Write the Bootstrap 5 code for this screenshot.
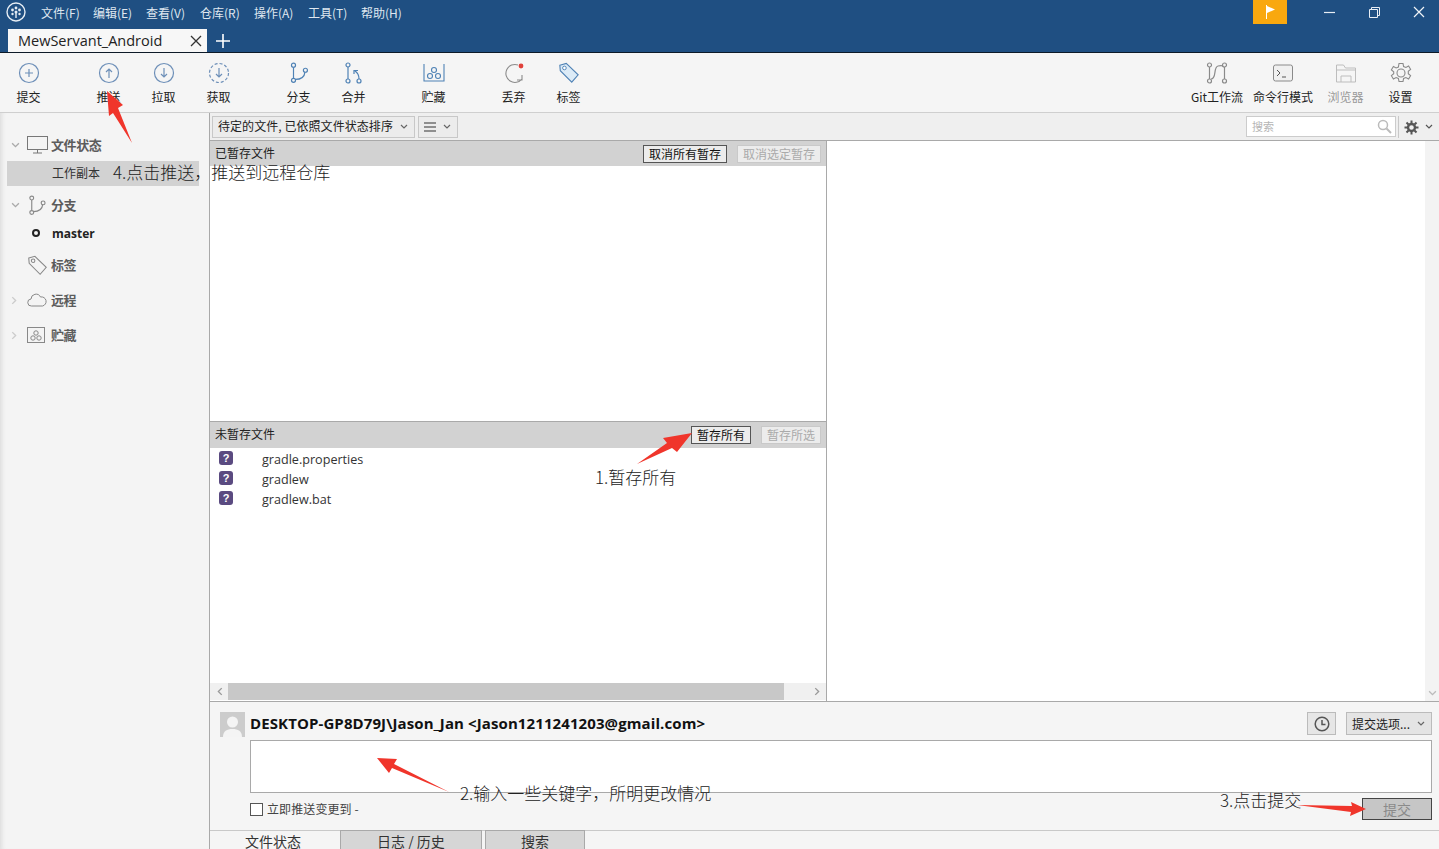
<!DOCTYPE html>
<html lang="zh-CN">
<head>
<meta charset="utf-8">
<title>SourceTree</title>
<link href="https://cdn.jsdelivr.net/npm/bootstrap@5.3.0/dist/css/bootstrap.min.css" rel="stylesheet">
<style>
html,body{height:849px;overflow:hidden}
body{font-family:"Noto Sans CJK SC","Liberation Sans",sans-serif;font-size:12px;line-height:1;color:#222;background:#f5f5f5;position:relative}
.app-shell{width:1439px;height:849px}
.title-zone{height:53px;background:#1f4f82;border-bottom:1px solid #0d1a28;flex:none}
.menu-row{height:26px;padding-left:6px}
.logo-wrap{width:35px}
.menu-label{color:#dfe7f0;margin-right:14px;font-size:12px;white-space:nowrap;width:40px}
.menu-label:nth-child(1){width:38px}
.menu-label:nth-child(2),.menu-label:nth-child(6){width:39px}
.flag-btn{width:34px;height:24px;background:#f9a80f;margin-right:22px}
.win-btn{width:40px;height:24px}
.win-btn+.win-btn{margin-left:5px}
.tab-row{height:26px;padding-left:8px}
.repo-tab{width:199px;height:23px;margin-top:3px;background:#f7f7f7;padding:0 5px 0 10px;font:14.500px "Open Sans",sans-serif;color:#222}
.tool-bar{height:60px;flex:none;border-bottom:1px solid #cfcfcf;background:#f5f5f5;padding:0 11px 0 1px}
.tool-item{width:55px;height:60px;padding-top:9px;color:#222;font-size:12px}
.tool-item.wide-item{width:66px;white-space:nowrap}
.tool-item.off-item{color:#999;margin-left:2px}
.tool-item svg{margin-bottom:7px;display:block}
.group-gap{margin-left:25px}
.main-zone{min-height:0}
.side-pane{width:210px;flex:none;border-right:1px solid #a9a9a9;background:#f4f4f4;padding:18px 10px 0 7px;box-shadow:inset 5px 0 4px -3px #ddd}
.side-row{height:28px;color:#5c5c5c;font-weight:700;font-size:13px;letter-spacing:-.4px}
.side-row svg{flex:none}
.side-row>span:last-child{margin-top:-2px}
.caret-cell{width:20px;flex:none;padding-left:4px}
.icon-cell{width:24px;flex:none}
.side-active{height:25px;margin:2px 0 5px;background:#d2d2d2;padding-left:45px;color:#333;font-weight:400;font-size:12px;letter-spacing:0}
.side-branch{padding-left:25px;color:#222;font:700 12px "Open Sans",sans-serif;letter-spacing:0}
.branch-dot{width:8px;height:8px;border:2px solid #222;border-radius:50%;margin-right:12px;margin-top:0!important}
.side-branch>.branch-dot{margin-top:0}
.gap-a{margin-top:4px}.gap-b{margin-top:7px}
.work-zone{min-width:0}
.filter-row{height:28px;flex:none;background:#efefef;border-bottom:1px solid #a9a9a9;padding:3px 0 2px 2px}
.pick-box{height:22px;background:#ececec;border:1px solid #c8c8c8;padding:0 6px 0 5px;font-size:12px;color:#222;white-space:nowrap}
.pick-sort{width:203px}.pick-view{width:40px;margin-left:3px}
.pick-sort span{letter-spacing:.06px;margin-top:-2px}
.search-box{width:150px;height:21px;background:#fff;border:1px solid #ccc;padding:0 3px 0 5px;color:#b5b5b5;font-size:11px;margin-right:2px}
.gear-box{width:41px;height:22px;padding:0 6px 0 5px;border-left:1px solid #c8c8c8}
.panes-zone{min-height:0;border-bottom:1px solid #a9a9a9}
.files-pane{width:617px;flex:none;border-right:1px solid #a9a9a9}
.stage-box{height:281px;flex:none;border-bottom:1px solid #a9a9a9;background:#fff}
.pane-head{height:26px;flex:none;background:#d2d2d2;padding:0 5px;font-size:12px;color:#222}
.pane-head>span{margin-top:-2px}
.stage-box .pane-head{height:25px}
.head-btn{height:18px;padding:0 5px;border-radius:0;font-size:12px;line-height:16px;background:#ececec;border:1px solid #555;color:#111;margin-left:10px}
.head-btn.off-btn{color:#aaa;border-color:#c9c9c9;background:#ececec}
.unstage-box{min-height:0;background:#fff}
.file-line{height:20px;padding-left:9px;font:12.600px "Open Sans",sans-serif;color:#333}
.file-list{padding-top:1px}
.qmark{width:14px;height:14px;border-radius:3px;background:#5a4a80;color:#fff;font:700 11px/14px "Liberation Sans",sans-serif;text-align:center;margin-right:29px;position:relative;top:-1px}
.hbar{height:17px;flex:none;background:#f0f0f0;margin-bottom:1px}
.bar-arrow{width:18px;flex:none;color:#999}
.hthumb{width:556px;background:#c8c8c8}
.diff-pane{background:#fff}
.vbar{width:14px;flex:none;background:#f3f3f3;color:#bbb;padding-bottom:4px}
.commit-zone{height:129px;flex:none;background:#f5f5f5;padding:10px 7px 0 10px;border-bottom:1px solid #c9c9c9}
.avatar-box{width:25px;height:25px;background:#ccc;overflow:hidden;flex:none;margin-right:5px}
.author-text{font:700 15px "Open Sans",sans-serif;color:#111;white-space:nowrap;letter-spacing:.1px}
.clock-btn{width:29px;height:23px;background:#e6e6e6;border:1px solid #bbb;margin-right:10px}
.opt-btn{width:86px;height:23px;background:#e4e4e4;border:1px solid #bbb;padding:0 6px 0 5px;color:#222;white-space:nowrap}
.msg-box{height:53px;margin:3px 0 0 30px;background:#fff;border:1px solid #a9a9a9}
.commit-foot{margin:5px 0 0 30px;height:22px}
.tick-box{width:13px;height:13px;background:#fff;border:1px solid #555;margin:0 4px 0 0;flex:none}
.tick-label{color:#444;font-size:12px;letter-spacing:.1px}
.send-btn{width:70px;height:22px;background:#c6c6c6;border:1px solid #444;color:#8a8a8a;font-size:14px;line-height:1}
.tabs-strip{height:18px;flex:none;background:#f5f5f5;padding-left:0}
.bottom-tab{height:19px;margin-top:-1px;border:1px solid #a9a9a9;border-bottom:0;background:#d6d6d6;color:#333;font-size:14px;padding-top:3px;position:relative}
.tab-now{width:130px;padding-left:35px;color:#333;font-size:14px;padding-top:3px}
.tab-log{width:142px}.tab-find{width:100px;margin-left:3px}
.note-layer{position:absolute;left:0;top:0;pointer-events:none}
.note-text{position:absolute;font-size:17px;line-height:20px;color:#222;white-space:nowrap;font-weight:300}
.n1{left:113px;top:162px}.n2{left:595px;top:467px}.n3{left:460px;top:783px}.n4{left:1220px;top:790px}
</style>
</head>
<body>
<svg width="0" height="0" class="position-absolute">
<defs>
<symbol id="chev-d" viewBox="0 0 8 6"><path d="M1 1l3 3 3-3" fill="none" stroke="currentColor" stroke-width="1.2"/></symbol>
<symbol id="chev-r" viewBox="0 0 6 8"><path d="M1 1l3 3-3 3" fill="none" stroke="currentColor" stroke-width="1.2"/></symbol>
<symbol id="branch" viewBox="0 0 22 24"><g fill="none" stroke="currentColor" stroke-width="1.3"><circle cx="5" cy="3.5" r="2.2"/><circle cx="5" cy="20" r="2.2"/><circle cx="18" cy="9" r="2.2"/><path d="M5 5.7v12.1M7 19c6 0 10-3 10.5-8"/></g></symbol>
<symbol id="tag" viewBox="0 0 24 24"><g fill="none" stroke="currentColor" stroke-width="1.2"><path d="M2 3.5 9 1.5l13 12.5-7 8L2.5 9.5z"/><circle cx="7" cy="6.5" r="2"/></g></symbol>
<symbol id="stash" viewBox="0 0 22 20"><g fill="none" stroke="currentColor" stroke-width="1.1"><path d="M1 1v17h20V1"/><circle cx="7" cy="13" r="2.5"/><circle cx="15" cy="13" r="2.5"/><circle cx="11" cy="7" r="2.5"/></g></symbol>
</defs>
</svg>
<div class="app-shell d-flex flex-column">
  <header class="title-zone d-flex flex-column">
    <div class="menu-row d-flex align-items-start">
      <div class="logo-wrap"><svg width="20" height="24" viewBox="0 0 20 24"><circle cx="10" cy="12" r="9" fill="none" stroke="#e6edf4" stroke-width="1.4"/><g fill="#e6edf4"><circle cx="10" cy="8" r="1.4"/><circle cx="6.5" cy="10" r="1.4"/><circle cx="13.5" cy="10" r="1.4"/><circle cx="6.5" cy="14" r="1.2"/><circle cx="13.5" cy="14" r="1.2"/><circle cx="10" cy="12" r="1.5"/><rect x="9.3" y="12" width="1.4" height="6"/></g></svg></div>
      <div class="d-flex align-items-center" style="height:25px">
        <span class="menu-label">文件(F)</span><span class="menu-label">编辑(E)</span><span class="menu-label">查看(V)</span><span class="menu-label">仓库(R)</span><span class="menu-label">操作(A)</span><span class="menu-label">工具(T)</span><span class="menu-label">帮助(H)</span>
      </div>
      <div class="ms-auto d-flex align-items-start">
        <div class="flag-btn d-flex align-items-center justify-content-center"><svg width="12" height="14" viewBox="0 0 12 14"><path d="M2 0h1v14H2z" fill="#fff"/><path d="M3 1l8 3.5L3 8z" fill="#fff"/></svg></div>
        <div class="win-btn d-flex align-items-center justify-content-center"><svg width="11" height="11" viewBox="0 0 11 11"><path d="M0 5.5h11" stroke="#e8eef5" stroke-width="1.2"/></svg></div>
        <div class="win-btn d-flex align-items-center justify-content-center"><svg width="11" height="11" viewBox="0 0 11 11"><path d="M.5 2.5h8v8h-8zM2.5 2.5v-2h8v8h-2" fill="none" stroke="#e8eef5"/></svg></div>
        <div class="win-btn d-flex align-items-center justify-content-center"><svg width="12" height="12" viewBox="0 0 12 12"><path d="M1 1l10 10M11 1L1 11" stroke="#f0f4f8" stroke-width="1.2"/></svg></div>
      </div>
    </div>
    <div class="tab-row d-flex align-items-start">
      <div class="repo-tab d-flex align-items-center justify-content-between"><span>MewServant_Android</span><svg width="12" height="12" viewBox="0 0 12 12"><path d="M1 1l10 10M11 1L1 11" stroke="#333" stroke-width="1.3"/></svg></div>
      <svg class="ms-2" style="margin-top:7px" width="16" height="16" viewBox="0 0 16 16"><path d="M8 1v14M1 8h14" stroke="#fff" stroke-width="1.6"/></svg>
    </div>
  </header>

  <nav class="tool-bar d-flex align-items-start">
    <div class="tool-item d-flex flex-column align-items-center"><svg width="22" height="22" viewBox="0 0 22 22"><g fill="none" stroke="#6d8fb8" stroke-width="1.2"><circle cx="11" cy="11" r="9.5"/><path d="M11 7v8M7 11h8"/></g></svg><span>提交</span></div>
    <div class="tool-item group-gap d-flex flex-column align-items-center"><svg width="22" height="22" viewBox="0 0 22 22"><g fill="none" stroke="#6d8fb8" stroke-width="1.2"><circle cx="11" cy="11" r="9.5"/><path d="M11 16V7M8 10l3-3 3 3"/></g></svg><span>推送</span></div>
    <div class="tool-item d-flex flex-column align-items-center"><svg width="22" height="22" viewBox="0 0 22 22"><g fill="none" stroke="#6d8fb8" stroke-width="1.2"><circle cx="11" cy="11" r="9.5"/><path d="M11 6v9M8 12l3 3 3-3"/></g></svg><span>拉取</span></div>
    <div class="tool-item d-flex flex-column align-items-center"><svg width="22" height="22" viewBox="0 0 22 22"><g fill="none" stroke="#6d8fb8" stroke-width="1.2"><circle cx="11" cy="11" r="9.5" stroke-dasharray="3 2"/><path d="M11 6v9M8 12l3 3 3-3"/></g></svg><span>获取</span></div>
    <div class="tool-item group-gap d-flex flex-column align-items-center" style="color:#222"><svg width="22" height="22" viewBox="0 0 22 24" style="color:#4f82b5"><use href="#branch"/></svg><span>分支</span></div>
    <div class="tool-item d-flex flex-column align-items-center"><svg width="22" height="22" viewBox="0 0 22 22"><g fill="none" stroke="#4f82b5" stroke-width="1.2"><circle cx="5" cy="3" r="2"/><circle cx="5" cy="19" r="2"/><circle cx="16" cy="19" r="2"/><path d="M5 5v12M16 17c0-4-1-6-4-8M11 12V8.500h4"/></g></svg><span>合并</span></div>
    <div class="tool-item group-gap d-flex flex-column align-items-center"><svg width="22" height="22" viewBox="0 0 22 20" style="color:#4f82b5"><use href="#stash"/></svg><span>贮藏</span></div>
    <div class="tool-item group-gap d-flex flex-column align-items-center"><svg width="22" height="22" viewBox="0 0 22 22"><path d="M15 3A9 9 0 1 0 19 17M19 13v5h-5" fill="none" stroke="#8a8a8a" stroke-width="1.1"/><circle cx="18" cy="4" r="2.4" fill="#e0413b"/></svg><span>丢弃</span></div>
    <div class="tool-item d-flex flex-column align-items-center"><svg width="22" height="22" viewBox="0 0 24 24"><path d="M2 3.500 9 1.500l13 12.500-7 8L2.500 9.500z" fill="#dcebf7" stroke="#4f82b5" stroke-width="1.2"/><circle cx="7" cy="6.500" r="2" fill="#fff" stroke="#4f82b5"/></svg><span>标签</span></div>
    <div class="ms-auto d-flex">
      <div class="tool-item wide-item d-flex flex-column align-items-center"><svg width="22" height="22" viewBox="0 0 22 22"><g fill="none" stroke="#8a8a8a" stroke-width="1.2"><circle cx="3.500" cy="3" r="2"/><circle cx="3.500" cy="19" r="2"/><circle cx="18.500" cy="3" r="2"/><circle cx="18.500" cy="19" r="2"/><path d="M3.500 5v12M18.500 5v12M5 17C11 17 7 5 12 4s3 0 5 0"/></g></svg><span>Git工作流</span></div>
      <div class="tool-item wide-item d-flex flex-column align-items-center"><svg width="22" height="22" viewBox="0 0 22 22"><rect x="1.500" y="3" width="19" height="16" rx="2" fill="#f0f0f0" stroke="#8a8a8a"/><path d="M5 8l3 3-3 3M10 15h4" fill="none" stroke="#555"/></svg><span>命令行模式</span></div>
      <div class="tool-item off-item d-flex flex-column align-items-center"><svg width="22" height="22" viewBox="0 0 22 22"><path d="M1.500 20V3h7l2 3h10v14zM6 20v-6h10v6M1.500 8h19" fill="none" stroke="#bdbdbd"/></svg><span>浏览器</span></div>
      <div class="tool-item d-flex flex-column align-items-center"><svg width="22" height="22" viewBox="0 0 22 22"><g fill="none" stroke="#8a8a8a" stroke-width="1.1"><circle cx="11" cy="11" r="4"/><path d="M9 1.500h4l.6 3 2.300 1 2.700-1.500 2 3.300-2.300 2v2.400l2.300 2-2 3.300-2.700-1.500-2.300 1-.6 3H9l-.6-3-2.300-1-2.700 1.500-2-3.300 2.300-2V9.800l-2.300-2 2-3.300 2.700 1.500 2.300-1z"/></g></svg><span>设置</span></div>
    </div>
  </nav>

  <div class="main-zone d-flex flex-grow-1">
    <aside class="side-pane">
      <div class="side-row d-flex align-items-center"><span class="caret-cell d-flex"><svg width="9" height="7" style="color:#aaa"><use href="#chev-d"/></svg></span><span class="icon-cell d-flex"><svg width="21" height="18" viewBox="0 0 21 18"><g fill="none" stroke="#777"><rect x=".5" y=".5" width="20" height="13"/><path d="M10.500 14v3M6 17h9"/></g></svg></span><span>文件状态</span></div>
      <div class="side-row side-active d-flex align-items-center"><span>工作副本</span></div>
      <div class="side-row d-flex align-items-center"><span class="caret-cell d-flex"><svg width="9" height="7" style="color:#aaa"><use href="#chev-d"/></svg></span><span class="icon-cell d-flex" style="color:#888"><svg width="20" height="21"><use href="#branch"/></svg></span><span>分支</span></div>
      <div class="side-row side-branch d-flex align-items-center"><span class="branch-dot"></span>master</div>
      <div class="side-row gap-a d-flex align-items-center"><span class="caret-cell"></span><span class="icon-cell d-flex" style="color:#888"><svg width="21" height="21"><use href="#tag"/></svg></span><span>标签</span></div>
      <div class="side-row gap-b d-flex align-items-center"><span class="caret-cell d-flex"><svg width="7" height="9" style="color:#ccc"><use href="#chev-r"/></svg></span><span class="icon-cell d-flex"><svg width="20" height="14" viewBox="0 0 20 14"><path d="M4.500 13A3.500 3.500 0 0 1 4 6 5 5 0 0 1 13.500 4 4.500 4.500 0 0 1 15.500 13z" fill="none" stroke="#888"/></svg></span><span>远程</span></div>
      <div class="side-row gap-b d-flex align-items-center"><span class="caret-cell d-flex"><svg width="7" height="9" style="color:#ccc"><use href="#chev-r"/></svg></span><span class="icon-cell d-flex"><svg width="18" height="16" viewBox="0 0 18 16"><rect x=".5" y=".5" width="17" height="15" fill="none" stroke="#888"/><g fill="none" stroke="#888"><circle cx="6" cy="11" r="2.200"/><circle cx="12" cy="11" r="2.200"/><circle cx="9" cy="6" r="2.200"/></g></svg></span><span>贮藏</span></div>
    </aside>

    <section class="work-zone d-flex flex-column flex-grow-1">
      <div class="filter-row d-flex align-items-start">
        <div class="pick-box pick-sort d-flex align-items-center justify-content-between"><span>待定的文件, 已依照文件状态排序</span><svg width="8" height="6" style="color:#666"><use href="#chev-d"/></svg></div>
        <div class="pick-box pick-view d-flex align-items-center justify-content-between"><svg width="12" height="10" viewBox="0 0 12 10"><path d="M0 1h12M0 5h12M0 9h12" stroke="#333" stroke-width="1.2"/></svg><svg width="8" height="6" style="color:#666"><use href="#chev-d"/></svg></div>
        <div class="search-box ms-auto d-flex align-items-center justify-content-between"><span>搜索</span><svg width="15" height="15" viewBox="0 0 15 15"><circle cx="6" cy="6" r="4.500" fill="none" stroke="#bbb" stroke-width="1.500"/><path d="M9.500 9.500l4.500 4.500" stroke="#bbb" stroke-width="2"/></svg></div>
        <div class="gear-box d-flex align-items-center justify-content-between"><svg width="15" height="15" viewBox="0 0 15 15"><circle cx="7.500" cy="7.500" r="3.500" fill="none" stroke="#555" stroke-width="2.400"/><path d="M7.500 .5v3M7.500 11.500v3M.5 7.500h3M11.500 7.500h3M2.500 2.500l2 2M10.500 10.500l2 2M12.500 2.500l-2 2M4.500 10.500l-2 2" stroke="#555" stroke-width="2"/></svg><svg width="8" height="6" style="color:#555"><use href="#chev-d"/></svg></div>
      </div>
      <div class="panes-zone d-flex flex-grow-1">
        <div class="files-pane d-flex flex-column">
          <div class="stage-box d-flex flex-column">
            <div class="pane-head d-flex align-items-center"><span class="me-auto">已暂存文件</span><button class="btn head-btn">取消所有暂存</button><button class="btn head-btn off-btn">取消选定暂存</button></div>
          </div>
          <div class="unstage-box d-flex flex-column flex-grow-1">
            <div class="pane-head d-flex align-items-center"><span class="me-auto">未暂存文件</span><button class="btn head-btn">暂存所有</button><button class="btn head-btn off-btn">暂存所选</button></div>
            <div class="file-list flex-grow-1">
              <div class="file-line d-flex align-items-center"><span class="qmark">?</span>gradle.properties</div>
              <div class="file-line d-flex align-items-center"><span class="qmark">?</span>gradlew</div>
              <div class="file-line d-flex align-items-center"><span class="qmark">?</span>gradlew.bat</div>
            </div>
            <div class="hbar d-flex">
              <span class="bar-arrow d-flex align-items-center justify-content-center"><svg width="7" height="9" style="transform:scaleX(-1)"><use href="#chev-r"/></svg></span>
              <span class="hthumb"></span>
              <span class="ms-auto bar-arrow d-flex align-items-center justify-content-center"><svg width="7" height="9"><use href="#chev-r"/></svg></span>
            </div>
          </div>
        </div>
        <div class="diff-pane flex-grow-1"></div>
        <div class="vbar d-flex align-items-end justify-content-center"><svg width="9" height="7"><use href="#chev-d"/></svg></div>
      </div>
      <div class="commit-zone">
        <div class="d-flex align-items-start">
          <div class="avatar-box"><svg width="25" height="25" viewBox="0 0 25 25"><circle cx="12.500" cy="10" r="5.500" fill="#f4f4f4"/><path d="M3 25c0-6 4-8 9.500-8S22 19 22 25z" fill="#f4f4f4"/></svg></div>
          <div class="author-text d-flex align-items-center" style="height:21px">DESKTOP-GP8D79J\Jason_Jan &lt;Jason1211241203@gmail.com&gt;</div>
          <div class="ms-auto d-flex">
            <div class="clock-btn d-flex align-items-center justify-content-center"><svg width="16" height="16" viewBox="0 0 16 16"><circle cx="8" cy="8" r="6.800" fill="none" stroke="#555" stroke-width="1.500"/><path d="M8 4v4.500h3.500" fill="none" stroke="#555" stroke-width="1.500"/></svg></div>
            <div class="opt-btn d-flex align-items-center justify-content-between"><span>提交选项...</span><svg width="8" height="6" style="color:#666"><use href="#chev-d"/></svg></div>
          </div>
        </div>
        <div class="msg-box"></div>
        <div class="commit-foot d-flex align-items-center justify-content-between">
          <label class="d-flex align-items-center"><input class="tick-box form-check-input rounded-0" type="checkbox"><span class="tick-label">立即推送变更到 -</span></label>
          <button class="btn send-btn rounded-0 p-0">提交</button>
        </div>
      </div>
      <div class="tabs-strip d-flex">
        <div class="tab-now">文件状态</div>
        <div class="bottom-tab tab-log text-center">日志 / 历史</div>
        <div class="bottom-tab tab-find text-center">搜索</div>
      </div>
    </section>
  </div>
</div>

<svg class="note-layer" width="1439" height="849" viewBox="0 0 1439 849">
  <g fill="#f0352b">
    <path d="M107 91 123 105 118 108 132 143 113 113 109 116z"/>
    <path d="M692 433 677 452 672 448 637 464 667 443 663 438z"/>
    <path d="M377 758 397 759 394 764 449 792 392 768 389 773z"/>
    <path d="M1366 809 1351 802 1352 806 1297 805 1351 812 1350 816z"/>
  </g>
</svg>
<div class="note-text n1">4.点击推送，推送到远程仓库</div>
<div class="note-text n2">1.暂存所有</div>
<div class="note-text n3">2.输入一些关键字，所明更改情况</div>
<div class="note-text n4">3.点击提交</div>
</body>
</html>
